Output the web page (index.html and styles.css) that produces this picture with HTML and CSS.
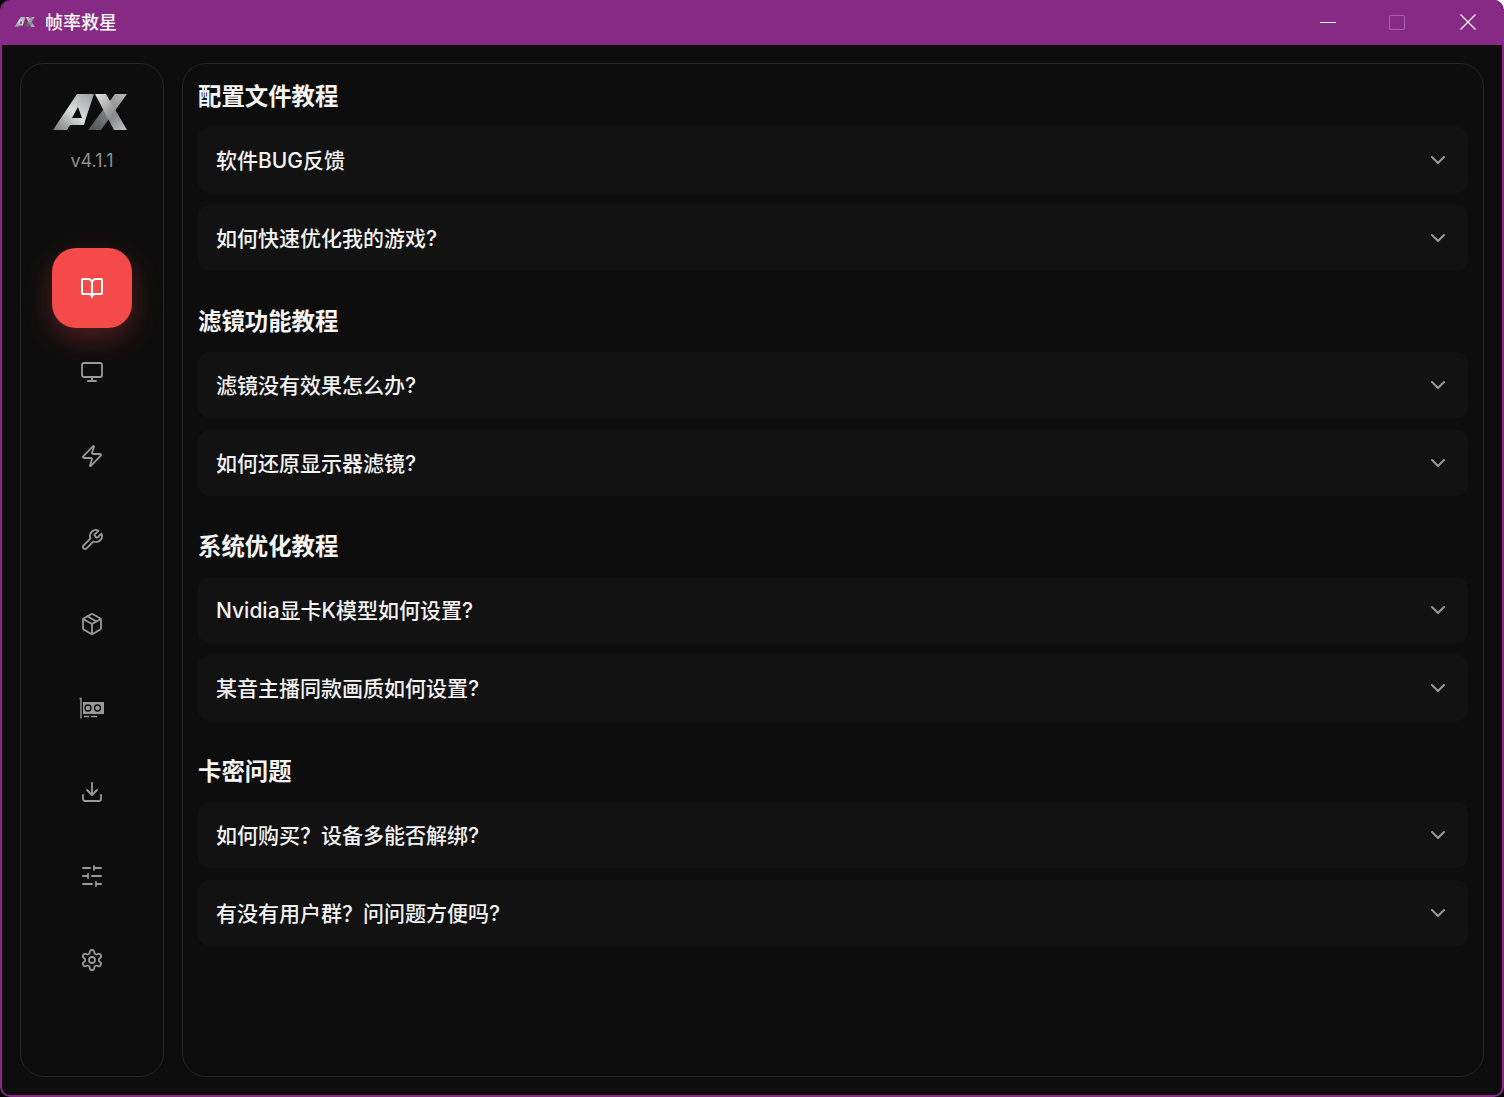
FILE: index.html
```html
<!DOCTYPE html>
<html lang="zh-CN">
<head>
    <meta charset="UTF-8">
    <title>帧率救星</title>
    <link rel="stylesheet" href="styles.css">
</head>
<body>
    <svg width="0" height="0" class="defs">
        <defs>
            <linearGradient id="axA" x1="0" y1="1" x2="1" y2="0">
                <stop offset="0" stop-color="#77787a"/>
                <stop offset="0.5" stop-color="#dcdddd"/>
                <stop offset="1" stop-color="#9a9b9d"/>
            </linearGradient>
            <linearGradient id="axB" x1="0" y1="0" x2="1" y2="1">
                <stop offset="0" stop-color="#e6e6e6"/>
                <stop offset="0.6" stop-color="#88898b"/>
                <stop offset="1" stop-color="#c8c9ca"/>
            </linearGradient>
            <linearGradient id="axC" x1="1" y1="0" x2="0" y2="1">
                <stop offset="0" stop-color="#b9babb"/>
                <stop offset="1" stop-color="#4c4d4f"/>
            </linearGradient>
            <symbol id="logo" viewBox="0 0 74 36">
                <path fill="url(#axC)" d="M74 0 H62 L35 36 H48 Z"/>
                <path fill="url(#axB)" d="M42 0 H53 L74 36 H61 Z"/>
                <path fill="url(#axA)" fill-rule="evenodd" d="M0 36 L24 0 H41 L33 24 L31 31 H17 L14 36 Z M25 13 L19 24 H29 Z"/>
            </symbol>
        </defs>
    </svg>

    <div class="window">
        <!-- title bar -->
        <header class="titlebar">
            <svg class="title-logo"><use href="#logo"/></svg>
            <span class="title-text">帧率救星</span>
            <div class="win-btns">
                <span class="win-btn"><svg width="18" height="18" viewBox="0 0 18 18"><path d="M1 9.500h16" stroke="#fff" stroke-width="1"/></svg></span>
                <span class="win-btn"><svg width="18" height="18" viewBox="0 0 18 18"><rect x="0.500" y="2.500" width="15" height="14" rx="1.500" fill="none" stroke="#a45fa6" stroke-width="1.200"/></svg></span>
                <span class="win-btn"><svg width="18" height="18" viewBox="0 0 18 18"><path d="M1.500 1.500l15 15M16.500 1.500l-15 15" stroke="#fff" stroke-width="1.200"/></svg></span>
            </div>
        </header>

        <div class="content">
            <!-- sidebar -->
            <aside class="sidebar">
                <svg class="logo"><use href="#logo"/></svg>
                <div class="version">v4.1.1</div>
                <nav class="nav">
                    <a class="nav-item active">
                        <svg class="icon" viewBox="0 0 24 24"><path d="M12 7v14"/><path d="M3 18a1 1 0 0 1-1-1V4a1 1 0 0 1 1-1h5a4 4 0 0 1 4 4 4 4 0 0 1 4-4h5a1 1 0 0 1 1 1v13a1 1 0 0 1-1 1h-6a3 3 0 0 0-3 3 3 3 0 0 0-3-3z"/></svg>
                    </a>
                    <a class="nav-item">
                        <svg class="icon" viewBox="0 0 24 24"><rect x="2" y="3" width="20" height="14" rx="2"/><path d="M8 21h8"/><path d="M12 17v4"/></svg>
                    </a>
                    <a class="nav-item">
                        <svg class="icon" viewBox="0 0 24 24"><path d="M4 14a1 1 0 0 1-.78-1.63l9.9-10.2a.5.5 0 0 1 .86.46l-1.92 6.02A1 1 0 0 0 13 10h7a1 1 0 0 1 .78 1.63l-9.9 10.2a.5.5 0 0 1-.86-.46l1.92-6.02A1 1 0 0 0 11 14z"/></svg>
                    </a>
                    <a class="nav-item">
                        <svg class="icon" viewBox="0 0 24 24"><path d="M14.7 6.3a1 1 0 0 0 0 1.4l1.6 1.6a1 1 0 0 0 1.4 0l3.77-3.77a6 6 0 0 1-7.94 7.94l-6.91 6.91a2.12 2.12 0 0 1-3-3l6.91-6.91a6 6 0 0 1 7.94-7.94l-3.76 3.76z"/></svg>
                    </a>
                    <a class="nav-item">
                        <svg class="icon" viewBox="0 0 24 24"><path d="M11 21.73a2 2 0 0 0 2 0l7-4A2 2 0 0 0 21 16V8a2 2 0 0 0-1-1.73l-7-4a2 2 0 0 0-2 0l-7 4A2 2 0 0 0 3 8v8a2 2 0 0 0 1 1.73z"/><path d="M12 22V12"/><path d="m3.3 7 8.7 5 8.7-5"/><path d="m7.5 4.27 9 5.15"/></svg>
                    </a>
                    <a class="nav-item">
                        <svg width="26" height="24" viewBox="0 0 26 24"><path d="M0.500 2.500H2V22.500" stroke="#999" stroke-width="1.400" fill="none"/><rect x="4" y="6" width="21" height="12" fill="#999"/><circle cx="9" cy="12" r="3" fill="none" stroke="#0d0d0d" stroke-width="1.300"/><circle cx="18.500" cy="12" r="3" fill="none" stroke="#0d0d0d" stroke-width="1.300"/><path d="M5 20.500h5M12 20.500h6" stroke="#999" stroke-width="1.300"/></svg>
                    </a>
                    <a class="nav-item">
                        <svg class="icon" viewBox="0 0 24 24"><path d="M21 15v4a2 2 0 0 1-2 2H5a2 2 0 0 1-2-2v-4"/><path d="M7 10l5 5 5-5"/><path d="M12 15V3"/></svg>
                    </a>
                    <a class="nav-item">
                        <svg class="icon" viewBox="0 0 24 24"><path d="M21 4h-7M10 4H3M21 12h-9M8 12H3M21 20h-5M12 20H3M14 2v4M8 10v4M16 18v4"/></svg>
                    </a>
                    <a class="nav-item">
                        <svg class="icon" viewBox="0 0 24 24"><path d="M12.220 2h-.44a2 2 0 0 0-2 2v.18a2 2 0 0 1-1 1.730l-.43.25a2 2 0 0 1-2 0l-.15-.08a2 2 0 0 0-2.730.73l-.22.38a2 2 0 0 0 .73 2.730l.15.1a2 2 0 0 1 1 1.720v.51a2 2 0 0 1-1 1.740l-.15.09a2 2 0 0 0-.73 2.730l.22.38a2 2 0 0 0 2.730.73l.15-.08a2 2 0 0 1 2 0l.43.25a2 2 0 0 1 1 1.730V20a2 2 0 0 0 2 2h.44a2 2 0 0 0 2-2v-.18a2 2 0 0 1 1-1.730l.43-.25a2 2 0 0 1 2 0l.15.08a2 2 0 0 0 2.730-.73l.22-.39a2 2 0 0 0-.73-2.730l-.15-.08a2 2 0 0 1-1-1.740v-.5a2 2 0 0 1 1-1.740l.15-.09a2 2 0 0 0 .73-2.730l-.22-.38a2 2 0 0 0-2.730-.73l-.15.08a2 2 0 0 1-2 0l-.43-.25a2 2 0 0 1-1-1.730V4a2 2 0 0 0-2-2z"/><circle cx="12" cy="12" r="3"/></svg>
                    </a>
                </nav>
            </aside>

            <!-- tutorials -->
            <main class="main">
                <section class="group">
                    <h2>配置文件教程</h2>
                    <div class="item"><span>软件BUG反馈</span><svg class="chev" viewBox="0 0 24 24"><path d="M6 9l6 6 6-6"/></svg></div>
                    <div class="item"><span>如何快速优化我的游戏?</span><svg class="chev" viewBox="0 0 24 24"><path d="M6 9l6 6 6-6"/></svg></div>
                </section>
                <section class="group">
                    <h2>滤镜功能教程</h2>
                    <div class="item"><span>滤镜没有效果怎么办?</span><svg class="chev" viewBox="0 0 24 24"><path d="M6 9l6 6 6-6"/></svg></div>
                    <div class="item"><span>如何还原显示器滤镜?</span><svg class="chev" viewBox="0 0 24 24"><path d="M6 9l6 6 6-6"/></svg></div>
                </section>
                <section class="group">
                    <h2>系统优化教程</h2>
                    <div class="item"><span>Nvidia显卡K模型如何设置?</span><svg class="chev" viewBox="0 0 24 24"><path d="M6 9l6 6 6-6"/></svg></div>
                    <div class="item"><span>某音主播同款画质如何设置?</span><svg class="chev" viewBox="0 0 24 24"><path d="M6 9l6 6 6-6"/></svg></div>
                </section>
                <section class="group">
                    <h2>卡密问题</h2>
                    <div class="item"><span>如何购买？设备多能否解绑?</span><svg class="chev" viewBox="0 0 24 24"><path d="M6 9l6 6 6-6"/></svg></div>
                    <div class="item"><span>有没有用户群？问问题方便吗?</span><svg class="chev" viewBox="0 0 24 24"><path d="M6 9l6 6 6-6"/></svg></div>
                </section>
            </main>
        </div>
    </div>
</body>
</html>
```

FILE: styles.css
```css
* {
    box-sizing: border-box;
}
html, body {
    margin: 0;
    height: 100%;
    overflow: hidden;
}
body {
    font-family: Inter, "Noto Sans CJK SC", sans-serif;
    color: #f2f2f2;
    background: linear-gradient(225deg, #fff 7px, #000 7px);
}
.defs {
    display: block;
    height: 0;
}
.window {
    height: 1097px;
    display: flex;
    flex-direction: column;
    background: #0d0d0d;
    border: 2px solid #862a85;
    border-top: none;
    border-radius: 10px;
    overflow: hidden;
}
.titlebar {
    height: 45px;
    flex: none;
    background: #862a85;
    display: flex;
    align-items: flex-start;
    padding-left: 12px;
    margin: 0 -2px;
}
.title-logo {
    width: 21px;
    height: 10px;
    margin-top: 17px;
    margin-left: 2px;
}
.title-text {
    margin-left: 10px;
    font-size: 18px;
    line-height: 46px;
    font-weight: 500;
    color: #fff;
}
.win-btns {
    margin-left: auto;
    display: flex;
    padding-right: 1px;
}
.win-btn {
    width: 70px;
    height: 44px;
    display: flex;
    align-items: center;
    justify-content: center;
}
.content {
    flex: 1;
    display: flex;
    gap: 18px;
    padding: 18px;
    min-height: 0;
}
.sidebar {
    width: 144px;
    flex: none;
    border: 1px solid #262626;
    border-radius: 24px;
    display: flex;
    flex-direction: column;
    align-items: center;
    padding-top: 30px;
}
.logo {
    width: 74px;
    height: 36px;
    display: block;
    margin-left: -4px;
}
.version {
    margin-top: 21px;
    font-size: 18px;
    line-height: 20px;
    color: #8f8f8f;
}
.nav {
    margin-top: 77px;
    display: flex;
    flex-direction: column;
    gap: 4px;
}
.nav-item {
    width: 80px;
    height: 80px;
    display: flex;
    align-items: center;
    justify-content: center;
    border-radius: 24px;
    color: #999;
}
.nav-item.active {
    background: #f54a4a;
    color: #fff;
    box-shadow: 0 10px 28px rgba(245, 74, 74, 0.3);
}
.nav-item.active .icon {
    stroke-width: 2;
}
.icon {
    width: 24px;
    height: 24px;
    fill: none;
    stroke: currentColor;
    stroke-width: 1.8;
    stroke-linecap: round;
    stroke-linejoin: round;
}
.main {
    flex: 1;
    border: 1px solid #262626;
    border-radius: 24px;
    padding: 17px 15px 0;
}
.group {
    margin-bottom: 35px;
}
h2 {
    margin: 0 0 14px;
    font-size: 23.4px;
    line-height: 32px;
    font-weight: 700;
    color: #f5f5f5;
}
.item {
    height: 66px;
    margin-bottom: 12px;
    padding: 0 18px;
    background: #121212;
    border-radius: 12px;
    display: flex;
    align-items: center;
    justify-content: space-between;
    font-size: 21px;
    font-weight: 500;
}
.item span {
    margin-bottom: 3px;
}
.chev {
    width: 24px;
    height: 24px;
    fill: none;
    stroke: #999;
    stroke-width: 2;
    stroke-linecap: round;
    stroke-linejoin: round;
}
```
